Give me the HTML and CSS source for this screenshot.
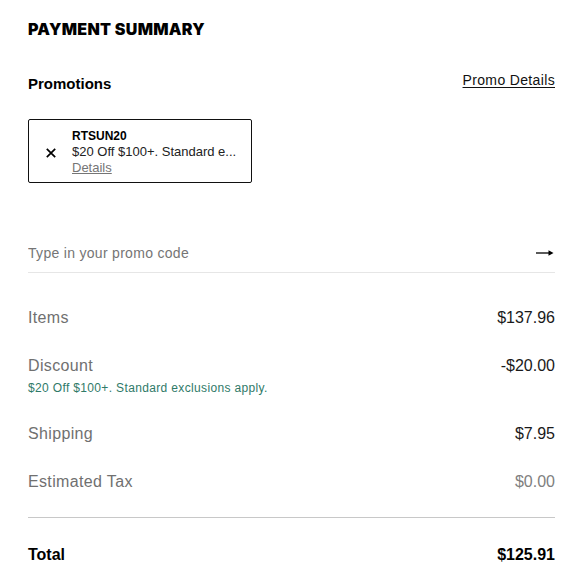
FILE: index.html
```html
<!DOCTYPE html>
<html lang="en">
<head>
<meta charset="utf-8">
<title>Payment Summary</title>
<link rel="stylesheet" href="styles.css">
</head>
<body>
<section class="summary">
  <h2 class="summary-title">PAYMENT SUMMARY</h2>

  <div class="promo-head">
    <h3 class="promo-title">Promotions</h3>
    <a class="promo-details" href="#">Promo Details</a>
  </div>

  <div class="promo-chip">
    <button class="chip-remove" type="button" aria-label="Remove promotion">
      <svg width="10" height="10" viewBox="0 0 10 10" aria-hidden="true">
        <path d="M0.8 0.8 L9.2 9.2 M9.2 0.8 L0.8 9.2" stroke="#000" stroke-width="1.7" fill="none"/>
      </svg>
    </button>
    <div class="chip-text">
      <div class="chip-code">RTSUN20</div>
      <div class="chip-desc">$20 Off $100+. Standard e...</div>
      <a class="chip-link" href="#">Details</a>
    </div>
  </div>

  <div class="promo-field">
    <input class="promo-input" type="text" placeholder="Type in your promo code">
    <button class="promo-submit" type="button" aria-label="Apply promo code">
      <svg width="18" height="8" viewBox="0 0 18 8" aria-hidden="true">
        <path d="M0 4 H13" stroke="#000" stroke-width="1.3" fill="none"/>
        <path d="M12.5 1.3 L17.5 4 L12.5 6.7 Z" fill="#000"/>
      </svg>
    </button>
  </div>

  <div class="lines">
    <div class="line">
      <span class="line-label">Items</span>
      <span class="line-value">$137.96</span>
    </div>
    <div class="line line-discount">
      <div class="line-main">
        <span class="line-label">Discount</span>
        <span class="line-value">-$20.00</span>
      </div>
      <div class="line-note">$20 Off $100+. Standard exclusions apply.</div>
    </div>
    <div class="line">
      <span class="line-label">Shipping</span>
      <span class="line-value">$7.95</span>
    </div>
    <div class="line">
      <span class="line-label">Estimated Tax</span>
      <span class="line-value line-value-muted">$0.00</span>
    </div>
  </div>

  <div class="total">
    <span class="total-label">Total</span>
    <span class="total-value">$125.91</span>
  </div>
</section>
</body>
</html>
```

FILE: styles.css
```css
* {
  box-sizing: border-box;
}

html, body {
  margin: 0;
  padding: 0;
  background: #fff;
}

body {
  font-family: "Liberation Sans", Arial, sans-serif;
  color: #111;
}

.summary {
  padding: 17px 18px 0 28px;
}

.summary-title {
  margin: 0;
  font-family: Inter, "Liberation Sans", sans-serif;
  font-weight: 900;
  font-size: 16px;
  line-height: 24px;
  letter-spacing: 0.3px;
  color: #000;
}

.promo-head {
  display: flex;
  justify-content: space-between;
  align-items: flex-start;
  margin-top: 31px;
}

.promo-title {
  margin: 0;
  font-size: 15px;
  line-height: 24px;
  font-weight: 700;
  color: #000;
}

.promo-details {
  font-size: 14px;
  line-height: 16px;
  letter-spacing: 0.35px;
  color: #111;
  text-decoration: underline;
  text-underline-offset: 2px;
}

.promo-chip {
  display: flex;
  align-items: center;
  width: 224px;
  height: 64px;
  margin-top: 23px;
  padding: 8px 11px 6px 17px;
  border: 1px solid #111;
  border-radius: 2px;
  gap: 16px;
}

.chip-remove {
  flex: none;
  display: flex;
  width: 10px;
  height: 10px;
  margin-top: 2px;
  padding: 0;
  border: 0;
  background: none;
}

.chip-text {
  flex: 1;
  min-width: 0;
  font-size: 13px;
  line-height: 16px;
}

.chip-code {
  font-size: 12px;
  font-weight: 700;
  color: #000;
}

.chip-desc {
  white-space: nowrap;
  color: #222;
}

.chip-link {
  display: block;
  width: max-content;
  color: #757575;
  text-decoration: underline;
}

.promo-field {
  display: flex;
  align-items: center;
  margin-top: 60px;
  padding-bottom: 9px;
  border-bottom: 1px solid #e6e6e6;
}

.promo-input {
  flex: 1;
  min-width: 0;
  height: 20px;
  padding: 0;
  border: 0;
  outline: none;
  font-family: "Liberation Sans", Arial, sans-serif;
  font-size: 14px;
  line-height: 20px;
  letter-spacing: 0.3px;
  color: #111;
  background: transparent;
}

.promo-input::placeholder {
  color: #757575;
  opacity: 1;
}

.promo-submit {
  flex: none;
  display: flex;
  align-items: center;
  padding: 0;
  margin-right: 1px;
  border: 0;
  background: none;
}

.lines {
  display: flex;
  flex-direction: column;
  gap: 24px;
  margin-top: 33px;
}

.line,
.line-main,
.total {
  display: flex;
  justify-content: space-between;
  font-size: 16px;
  line-height: 24px;
}

.line-label {
  color: #707070;
  letter-spacing: 0.35px;
}

.line-value {
  color: #1a1a1a;
}

.line-value-muted {
  color: #808080;
}

.line-discount {
  display: block;
}

.line-note {
  font-size: 12px;
  line-height: 20px;
  letter-spacing: 0.35px;
  color: #2f7a68;
}

.total {
  margin-top: 23px;
  padding-top: 25px;
  border-top: 1px solid #c8c8c8;
  font-weight: 700;
  color: #000;
}
```
